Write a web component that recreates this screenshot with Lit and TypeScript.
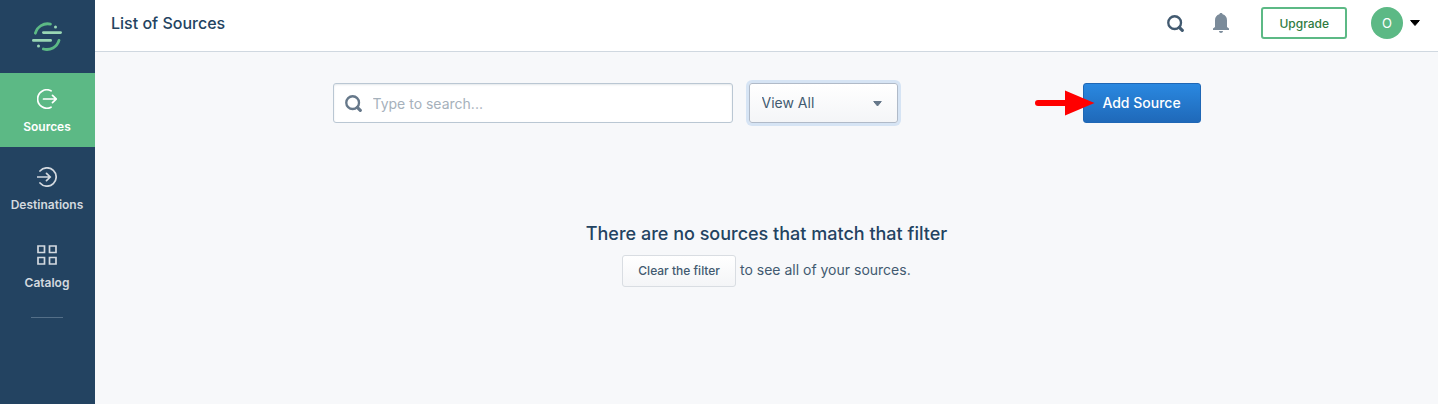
import { LitElement, html, css, svg } from "lit";
import { customElement, state } from "lit/decorators.js";

const searchIcon = svg`<circle cx="7.2" cy="7.2" r="6" fill="none" stroke="currentColor" stroke-width="2.2"/><path d="M11.8 11.8 L14.4 14.4" stroke="currentColor" stroke-width="3" stroke-linecap="round"/>`;

const navItems = [
  {
    label: "Sources",
    icon: svg`<path d="M14 1.8 A9.2 9.2 0 1 0 14 18.2"/><path d="M6.5 10 H19 M15.5 6.3 L19.2 10 L15.5 13.7"/>`,
  },
  {
    label: "Destinations",
    icon: svg`<path d="M3 4 A9.2 9.2 0 1 1 3 16"/><path d="M0.5 10 H13 M9.5 6.3 L13.2 10 L9.5 13.7"/>`,
  },
  {
    label: "Catalog",
    icon: svg`<path stroke-linecap="butt" d="M1 1 H7.5 V7.5 H1 Z M12.5 1 H19 V7.5 H12.5 Z M1 12.5 H7.5 V19 H1 Z M12.5 12.5 H19 V19 H12.5 Z"/>`,
  },
];

@customElement("side-nav")
class SideNav extends LitElement {
  @state() private active = "Sources";

  static styles = css`
    :host {
      display: block;
      background: #234361;
      text-align: center;
    }
    .logo {
      display: flex;
      justify-content: center;
      align-items: center;
      height: 73px;
      padding-right: 1px;
    }
    .list {
      display: flex;
      flex-direction: column;
      gap: 4px;
    }
    .item {
      display: flex;
      flex-direction: column;
      align-items: center;
      gap: 9px;
      padding: 16px 1px 11px 0;
      color: #d3d9df;
      font-size: 12px;
      font-weight: 600;
      line-height: 18px;
      text-decoration: none;
    }
    .item.active {
      background: #5cb985;
      color: #fff;
    }
    .rule {
      padding-right: 1px;
    }
    .divider {
      width: 32px;
      height: 1px;
      margin: 14px auto 0;
      border: 0;
      background: #546f88;
    }
    svg {
      display: block;
    }
  `;

  render() {
    return html`
      <div class="logo">
        <svg width="30" height="30" viewBox="0 0 30 30" fill="none" stroke-width="2.8" stroke-linecap="round" role="img" aria-label="Segment">
          <path d="M3.4 11.2 A12.6 12.6 0 0 1 18.4 2.1 M11.4 27 A12.6 12.6 0 0 0 27 18.4" stroke="#5cb985"/>
          <path d="M11.4 10.6 H28.6 M1.4 18.4 H18.6" stroke="#99d6b4"/>
          <circle cx="23.5" cy="4.9" r="1.5" fill="#99d6b4"/>
          <circle cx="6.5" cy="23.9" r="1.5" fill="#99d6b4"/>
        </svg>
      </div>
      <nav class="list" aria-label="Main">
        ${navItems.map(
          (item) => html`<a
            class="item ${item.label === this.active ? "active" : ""}"
            href="#${item.label.toLowerCase()}"
            @click=${() => (this.active = item.label)}
          >
            <svg width="20" height="20" viewBox="0 0 20 20" fill="none" stroke="currentColor" stroke-width="1.7" stroke-linecap="round" stroke-linejoin="miter" aria-hidden="true">${item.icon}</svg>
            ${item.label}
          </a>`
        )}
      </nav>
      <div class="rule"><hr class="divider" /></div>
    `;
  }
}

@customElement("top-bar")
class TopBar extends LitElement {
  static styles = css`
    :host {
      display: flex;
      align-items: center;
      justify-content: space-between;
      box-sizing: border-box;
      padding: 7px 18px 12px 16px;
      background: #fff;
      border-bottom: 1px solid #d0d8e0;
    }
    .title {
      margin: 0;
      color: #234361;
      font-size: 16px;
      font-weight: 500;
      line-height: 24px;
    }
    .actions {
      display: flex;
      align-items: center;
    }
    button {
      display: flex;
      align-items: center;
      padding: 0;
      border: 0;
      background: none;
      font: inherit;
      cursor: pointer;
    }
    .search {
      margin-right: 29px;
      color: #425a70;
    }
    .bell {
      margin-right: 32px;
      color: #7b8b9a;
    }
    .upgrade {
      height: 32px;
      margin-right: 24px;
      padding: 0 16px;
      border: 2px solid #5cb985;
      border-radius: 3px;
      background: #fff;
      color: #2f7b3f;
      font-size: 12px;
      font-weight: 500;
    }
    .account {
      gap: 7px;
    }
    .avatar {
      width: 32px;
      border-radius: 50%;
      background: #5cb985;
      color: #fff;
      font-size: 13px;
      line-height: 32px;
      text-align: center;
    }
  `;

  render() {
    return html`
      <h1 class="title">List of Sources</h1>
      <div class="actions">
        <button class="search" aria-label="Search">
          <svg width="17" height="17" viewBox="0 0 16 16">${searchIcon}</svg>
        </button>
        <button class="bell" aria-label="Notifications">
          <svg width="16" height="20" viewBox="0 0 16 20" fill="currentColor">
            <path d="M8 0 C9 0 9.6 .6 9.6 1.3 C12.4 2 14 4.3 14 7.2 V14 L16 15.5 V17 H0 V15.5 L2 14 V7.2 C2 4.3 3.6 2 6.4 1.3 C6.4 .6 7 0 8 0 Z M6 18 H10 C10 19.2 9.1 20 8 20 C6.9 20 6 19.2 6 18 Z"/>
          </svg>
        </button>
        <button class="upgrade">Upgrade</button>
        <button class="account" aria-label="Account menu">
          <span class="avatar">O</span>
          <svg width="10" height="6" viewBox="0 0 10 6"><path d="M.6 .5 H9.4 L5 5.5 Z" fill="#000" stroke="#000" stroke-linejoin="round"/></svg>
        </button>
      </div>
    `;
  }
}

@customElement("source-list")
class SourceList extends LitElement {
  static styles = css`
    :host {
      display: block;
      box-sizing: border-box;
      max-width: 900px;
      margin: 0 auto;
      padding: 31px 16px;
    }
    .toolbar {
      display: flex;
      align-items: center;
      gap: 16px;
    }
    input,
    select,
    button {
      box-sizing: border-box;
      font: inherit;
      border-radius: 3px;
    }
    .search {
      display: grid;
      flex: 0 1 400px;
      align-items: center;
    }
    .search > *,
    .filter > * {
      grid-area: 1 / 1;
    }
    .search svg {
      z-index: 1;
      margin-left: 12px;
      color: #66788a;
      pointer-events: none;
    }
    .field {
      width: 100%;
      height: 40px;
      padding: 1px 12px 0 39px;
      border: 1px solid #bac7d3;
      background: #fff;
      box-shadow: inset 0 1px 2px rgba(67, 90, 111, 0.14);
      color: #425a70;
      font-size: 14px;
    }
    .field::placeholder {
      color: #a6b1bb;
      opacity: 1;
    }
    .filter {
      display: grid;
      flex: 0 0 149px;
      align-items: center;
    }
    .select {
      appearance: none;
      width: 100%;
      height: 40px;
      padding: 0 32px 1px 12px;
      border: 1px solid #b0bac8;
      outline: none;
      background: linear-gradient(#fff, #f4f5f7);
      box-shadow: 0 0 0 3px #d6e4f4;
      color: #425a70;
      font-size: 14px;
    }
    .filter svg {
      justify-self: end;
      margin: 2px 16px 0 0;
      pointer-events: none;
    }
    .add {
      position: relative;
      margin-left: auto;
    }
    .primary {
      width: 118px;
      height: 40px;
      padding: 0 0 1px;
      border: 1px solid #1f67b5;
      background: linear-gradient(#2a88e0, #1f69b9);
      color: #fff;
      font-size: 14px;
      font-weight: 500;
    }
    .pointer {
      position: absolute;
      left: -48px;
      top: 7px;
      pointer-events: none;
    }
    .empty {
      margin-top: 99px;
      text-align: center;
      color: #425a70;
      font-size: 14px;
    }
    .heading {
      margin: 0 0 9px;
      color: #234361;
      font-size: 18px;
      font-weight: 500;
      line-height: 24px;
    }
    .hint {
      display: flex;
      justify-content: center;
      align-items: center;
      gap: 4px;
      margin: 0;
      line-height: 30px;
    }
    .message {
      padding-bottom: 2px;
    }
    .clear {
      height: 32px;
      padding: 0 15px 1px;
      border: 1px solid #d9dde2;
      background: linear-gradient(#fff, #f4f5f7);
      color: #425a70;
      font-size: 12px;
      font-weight: 500;
      line-height: 16px;
    }
  `;

  render() {
    return html`
      <div class="toolbar">
        <div class="search">
          <svg width="17" height="17" viewBox="0 0 16 16" aria-hidden="true">${searchIcon}</svg>
          <input class="field" type="text" aria-label="Search sources" placeholder="Type to search..." />
        </div>
        <div class="filter">
          <select class="select" aria-label="Filter sources">
            <option>View All</option>
          </select>
          <svg width="9" height="6" viewBox="0 0 9 6" aria-hidden="true"><path d="M.7 .5 H8.3 L4.5 5 Z" fill="#66788a" stroke="#66788a" stroke-linejoin="round"/></svg>
        </div>
        <div class="add">
          <button class="primary">Add Source</button>
          <svg class="pointer" width="60" height="26" viewBox="0 0 60 26" aria-hidden="true">
            <path d="M3 13 H34" stroke="red" stroke-width="6" stroke-linecap="round"/>
            <path d="M30 0.5 L59.5 13 L30 25.5 Z" fill="red"/>
          </svg>
        </div>
      </div>
      <section class="empty">
        <h2 class="heading">There are no sources that match that filter</h2>
        <p class="hint">
          <button class="clear">Clear the filter</button>
          <span class="message">to see all of your sources.</span>
        </p>
      </section>
    `;
  }
}

@customElement("app-root")
class AppRoot extends LitElement {
  static styles = css`
    :host {
      display: grid;
      grid-template-columns: 95px minmax(0, 1fr);
      min-height: 100vh;
      background: #f7f8fa;
      font-family: Inter, "Liberation Sans", sans-serif;
    }
  `;

  render() {
    return html`
      <side-nav></side-nav>
      <main>
        <top-bar></top-bar>
        <source-list></source-list>
      </main>
    `;
  }
}
